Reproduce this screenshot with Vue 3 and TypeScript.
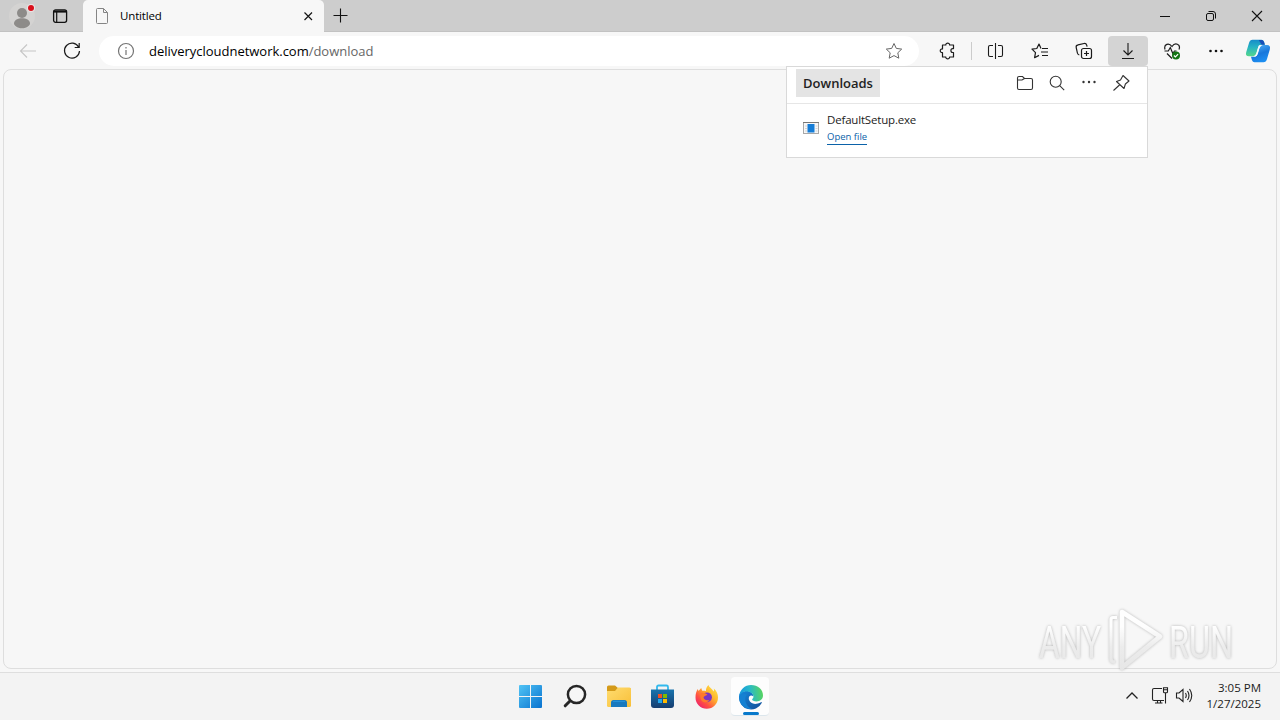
<script setup lang="ts">
import { ref } from 'vue'

const tabTitle = ref('Untitled')
const host = ref('deliverycloudnetwork.com')
const path = ref('/download')
const fileName = ref('DefaultSetup.exe')
</script>

<template>
  <div class="desktop">
    <header class="tabbar">
      <div class="profile">
        <svg width="28" height="28" viewBox="0 0 28 28">
          <circle cx="14" cy="14" r="13" fill="#d4d3d2" />
          <circle cx="14" cy="11" r="5" fill="#8d8b89" />
          <path d="M6 21.500c0-7 16-7 16 0 0 1.600-3 4.800-8 4.800s-8-3.200-8-4.800z" fill="#8d8b89" />
          <circle cx="23" cy="6" r="4" fill="#ebe4e4" />
          <circle cx="23" cy="6" r="3" fill="#d9101c" />
        </svg>
      </div>
      <button class="workspaces">
        <svg width="16" height="16" viewBox="0 0 16 16" fill="none" stroke="#111">
          <rect x="1.600" y="1.800" width="13" height="12.500" rx="2" stroke-width="1.300" />
          <path d="M1.600 3.500H14.600" stroke-width="2.200" /><path d="M4.700 4v10" stroke-width="1.200" />
        </svg>
      </button>
      <div class="tab">
        <svg width="14" height="18" viewBox="0 0 14 18" fill="none" stroke="#858585">
          <path d="M1.500 2.500q0-1 1-1h6l4 4v10q0 1-1 1h-9q-1 0-1-1zM8.500 1.500v4h4" />
        </svg>
        <span class="tab-title">{{ tabTitle }}</span>
        <svg width="10" height="10" viewBox="0 0 10 10" stroke="#151515" stroke-width="1.200">
          <path d="M1.500 1.500l7.500 7.500M9 1.500L1.500 9" />
        </svg>
      </div>
      <button class="new-tab">
        <svg width="15" height="15" viewBox="0 0 15 15" stroke="#111" stroke-width="1.100">
          <path d="M7.500 .5v14M.5 7.500h14" />
        </svg>
      </button>
      <div class="controls">
        <button>
          <svg width="12" height="12" viewBox="0 0 12 12" stroke="#111"><path d="M1 6.500h10" /></svg>
        </button>
        <button>
          <svg width="12" height="12" viewBox="0 0 12 12" fill="none" stroke="#111">
            <rect x="1.500" y="3.500" width="7" height="7" rx="1.500" />
            <path d="M3.500 1.500h4.500q2.500 0 2.500 2.500v4.500" />
          </svg>
        </button>
        <button>
          <svg width="12" height="12" viewBox="0 0 12 12" stroke="#111" stroke-width="1.100"><path d="M1 1l10 10M11 1L1 11" /></svg>
        </button>
      </div>
    </header>

    <nav class="toolbar">
      <button class="tool">
        <svg width="20" height="20" viewBox="0 0 20 20" fill="none" stroke="#c6c6c6" stroke-width="1.100"><path d="M18 10H2.500M9 3.500L2.500 10 9 16.500" /></svg>
      </button>
      <button class="tool">
        <svg width="20" height="20" viewBox="0 0 20 20" fill="none" stroke="#1b1b1b" stroke-width="1.200"><path d="M16.700 6.200A7.500 7.500 0 1 0 17.500 10M17.200 2v4.500h-4.500" /></svg>
      </button>
      <div class="address">
        <svg width="18" height="18" viewBox="0 0 18 18" fill="none" stroke="#747474" stroke-width="1.200">
          <circle cx="9" cy="9" r="7.500" /><path d="M9 8v5M9 5v1.400" />
        </svg>
        <span class="url"><span class="host">{{ host }}</span><span class="path">{{ path }}</span></span>
        <svg width="18" height="18" viewBox="0 0 18 18" fill="none" stroke="#666" stroke-linejoin="round">
          <path d="M9 1.500l2.300 4.900 5.400.7-3.900 3.700 1 5.400L9 13.600l-4.800 2.600 1-5.400-3.900-3.700 5.400-.7z" />
        </svg>
      </div>
      <button class="tool ext">
        <svg width="18" height="18" viewBox="0 0 18 18" fill="none" stroke="#1b1b1b" stroke-width="1.200" stroke-linejoin="round">
          <path d="M3.500 3h3.300c-.2-2.500 4-2.500 3.800 0H14.500v3.600h-.8c-2.400 0-2.400 3.900 0 3.900h.8V15h-3.900c.2 2.400-4 2.400-3.800 0H3.500v-4.300c-3 .2-3-4 0-3.800z" />
        </svg>
      </button>
      <span class="separator"></span>
      <button class="tool">
        <svg width="18" height="18" viewBox="0 0 18 18" fill="none" stroke="#1b1b1b" stroke-width="1.100">
          <path d="M6 3.500H3Q1.500 3.500 1.500 5v8q0 1.500 1.500 1.500h3M8.500 1v16M11 3.500h3q1.500 0 1.500 1.500v8q0 1.500-1.500 1.500h-3" />
        </svg>
      </button>
      <button class="tool">
        <svg width="18" height="18" viewBox="0 0 18 18" fill="none" stroke="#1b1b1b" stroke-width="1.200" stroke-linejoin="round">
          <path d="M10 6.500L8 2 5.800 6.500 1 7.200l3.500 3.500-.9 5 4.400-2.300M11 6.500h6M10 10h7M11 13.500h6" />
        </svg>
      </button>
      <button class="tool">
        <svg width="18" height="18" viewBox="0 0 18 18" fill="none" stroke="#1b1b1b" stroke-width="1.200">
          <rect x="6.500" y="6.500" width="10" height="10" rx="2" />
          <path d="M11.500 9v5M9 11.500h5M4.300 13C3 12.600 2.600 12 2.400 11L1.200 5.500C.9 4 1.500 3.200 3 2.900l6-1.400c1.500-.3 2.300.3 2.700 1.700l.4 1.500" />
        </svg>
      </button>
      <button class="tool selected">
        <svg width="18" height="18" viewBox="0 0 18 18" fill="none" stroke="#1b1b1b" stroke-width="1.100"><path d="M9 1v12M4.500 8.500L9 13l4.500-4.500M3 16.500h12" /></svg>
      </button>
      <button class="tool">
        <svg width="18" height="18" viewBox="0 0 18 18" fill="none" stroke="#1b1b1b" stroke-width="1.200">
          <path d="M2 7.500C.5 2 6 .5 9 4.500 12 0 18 2 16 7.500M1.500 9h3.800l2-3.500 2.500 6L11.500 9h2M4 11.500l5 5" />
          <circle cx="13" cy="13.500" r="4" fill="#137514" stroke="none" />
          <path d="M10.900 13.500l1.500 1.500 2.700-2.800" stroke="#fff" />
        </svg>
      </button>
      <button class="tool">
        <svg width="18" height="18" viewBox="0 0 18 18" fill="#111"><circle cx="3.500" cy="9" r="1.300" /><circle cx="9" cy="9" r="1.300" /><circle cx="14.500" cy="9" r="1.300" /></svg>
      </button>
      <button class="tool copilot">
        <svg width="26" height="24" viewBox="0 0 26 24">
          <defs>
            <linearGradient id="cpA" x1="0" y1="0" x2="0" y2="1"><stop offset="0" stop-color="#168bc9" /><stop offset=".45" stop-color="#26b3c4" /><stop offset="1" stop-color="#55d78b" /></linearGradient>
            <linearGradient id="cpB" x1="0" y1="0" x2=".4" y2="1"><stop offset="0" stop-color="#56b8fa" /><stop offset=".6" stop-color="#1877db" /><stop offset="1" stop-color="#1c8df0" /></linearGradient>
          </defs>
          <path d="M7.500.7h9q1.800 0 2.500 2l1 3h-3.500q-2.500 0-3.300 2.500l-1.500 5q-1 4-4.500 4H4q-4 0-2.800-4L4 4Q5 .7 7.500.7z" fill="url(#cpA)" />
          <path d="M18.500 23.300h-9q-1.800 0-2.500-2L6 17.700h2.500q3.300 0 4.200-3.200l1.500-5q1-3.500 4.500-3.500H22q4 0 2.800 4.500L22 20q-1 3.300-3.500 3.300z" fill="url(#cpB)" />
          <path d="M13.800 1h2.700q1.800 0 2.500 2l.8 2.700h-3.300z" fill="#164eb8" />
          <path d="M14 6.200h3q-1.800.8-2.600 3.300l-1.600 5.200q-.8 2.400-2.600 3H8.800q1.800-1 2.500-3.300l1.500-5Q13.300 7 14 6.200z" fill="#f5fbfd" />
        </svg>
      </button>
    </nav>

    <main class="page"></main>

    <section class="downloads">
      <div class="downloads-head">
        <h1>Downloads</h1>
        <div class="actions">
          <svg width="18" height="18" viewBox="0 0 18 18" fill="none" stroke="#333" stroke-width="1.100"><path d="M1.500 5.500v8.500q0 1.500 1.500 1.500h12q1.500 0 1.500-1.500V6q0-1.500-1.500-1.500H8.500L6.500 2.500H3q-1.500 0-1.500 1.500zM1.500 6H6l2.500-1.500" /></svg>
          <svg width="18" height="18" viewBox="0 0 18 18" fill="none" stroke="#333" stroke-width="1.100"><circle cx="7.700" cy="7.700" r="5.500" /><path d="M11.700 11.700l4.500 4.500" /></svg>
          <svg width="18" height="18" viewBox="0 0 18 18" fill="#333"><circle cx="3.500" cy="8" r="1.200" /><circle cx="9" cy="8" r="1.200" /><circle cx="14.500" cy="8" r="1.200" /></svg>
          <svg width="18" height="18" viewBox="0 0 18 18" fill="none" stroke="#333" stroke-width="1.100" stroke-linejoin="round"><path d="M11 1.500l6 5.500-3.600 3-1.400 4.500-7.500-7L8.500 6zM8 10.500L1.500 16.500" /></svg>
        </div>
      </div>
      <div class="download-item">
        <svg width="16" height="14" viewBox="0 0 16 14">
          <rect x=".5" y="1.500" width="15" height="11" fill="#f7f7f7" stroke="#a8a8a8" />
          <path d="M0 1.500h16" stroke="#777" />
          <path d="M2 5h2M2 7.500h2M2 10h2M12.500 5h2M12.500 7.500h2M12.500 10h2" stroke="#d4d4d4" />
          <rect x="4.500" y="3" width="7" height="8.500" fill="#157dd7" />
        </svg>
        <div class="file">
          <span class="file-name">{{ fileName }}</span>
          <a class="open">Open file</a>
        </div>
      </div>
    </section>

    <footer class="taskbar">
      <div class="apps">
        <div class="app">
          <svg width="26" height="26" viewBox="0 0 26 26">
            <defs><linearGradient id="win" x1="0" y1="0" x2="1" y2="1"><stop stop-color="#51c4f5" /><stop offset="1" stop-color="#0872cf" /></linearGradient></defs>
            <path d="M2 1h10v11H1V2q0-1 1-1zM13 1H23q1 0 1 1v10H13zM1 13h11v11H2q-1 0-1-1zM13 13H24v10q0 1-1 1h-10z" fill="url(#win)" />
          </svg>
        </div>
        <div class="app">
          <svg width="26" height="26" viewBox="0 0 26 26" fill="none"><circle cx="14.500" cy="10.500" r="8.600" fill="#f6f6f6" stroke="#262626" stroke-width="2.500" /><path d="M8.200 16.800l-5 5" stroke="#262626" stroke-width="3" stroke-linecap="round" /></svg>
        </div>
        <div class="app">
          <svg width="26" height="26" viewBox="0 0 26 26">
            <defs><linearGradient id="fold" x1="0" y1="0" x2="1" y2="1"><stop stop-color="#ffdc70" /><stop offset="1" stop-color="#f8bf38" /></linearGradient></defs>
            <path d="M1 3q0-1.500 1.500-1.500H9L12 4h11.500Q25 4 25 5.500V22H1z" fill="#d49a19" />
            <path d="M1 7h8l3-3.500h11.500Q25 3.500 25 5v16.500q0 1.500-1.500 1.500h-21Q1 23 1 21.500z" fill="url(#fold)" />
            <path d="M5 23v-4.500Q5 16 7.500 16h11q2.500 0 2.500 2.500V23z" fill="#1878bd" /><path d="M7 17.300h12" stroke="#2996dc" />
          </svg>
        </div>
        <div class="app">
          <svg width="26" height="26" viewBox="0 0 26 26">
            <defs><linearGradient id="store" x1="0" y1="0" x2="0" y2="1"><stop stop-color="#1974ad" /><stop offset="1" stop-color="#153d70" /></linearGradient></defs>
            <path d="M7 7V3q0-1.500 1.500-1.500h8Q18 1.500 18 3v4" fill="none" stroke="#32b9ed" stroke-width="1.800" />
            <path d="M1 5.500h23V21q0 3-3 3H4q-3 0-3-3z" fill="url(#store)" />
            <path d="M8 10h4v4H8z" fill="#f25022" /><path d="M13 10h4v4h-4z" fill="#7fba00" /><path d="M8 15h4v4H8z" fill="#22a7ee" /><path d="M13 15h4v4h-4z" fill="#ffb900" />
          </svg>
        </div>
        <div class="app">
          <svg width="26" height="26" viewBox="0 0 26 26">
            <defs><linearGradient id="fx" x1="1" y1="0" x2=".1" y2="1"><stop stop-color="#fff04f" /><stop offset=".4" stop-color="#ffb52c" /><stop offset=".7" stop-color="#ff5142" /><stop offset="1" stop-color="#e91779" /></linearGradient></defs>
            <path d="M14.500 1c.5 2.500 3.500 3.500 5 6.500.6-.8.6-2 .3-3 3 2.500 4.200 5.500 4.200 9a11.200 11.200 0 0 1-22.500 0c0-3.500.8-6.300 2.300-8.500L4.500 7l2.700-3 1 2.800c1.400-.3 2.600-.2 3.800.2-.2-2.500.8-4.500 2.500-6z" fill="url(#fx)" />
            <circle cx="13" cy="13.300" r="4.900" fill="#7a35c4" />
            <path d="M7 9.200c2.300-1.300 4.500.2 6.500 1.300-1 1.500-3.500 1-4 3 .7 2.500 3.500 3.500 6 2.200-1.500 3.300-6.500 3.500-8.300.2-1.200-2-1.200-4.700-.2-6.700z" fill="#ff7a2c" />
          </svg>
        </div>
        <div class="app active">
          <svg width="26" height="26" viewBox="0 0 26 26">
            <defs>
              <linearGradient id="edA" x1="0" y1=".4" x2="1" y2=".3"><stop stop-color="#1595df" /><stop offset=".45" stop-color="#28b9c9" /><stop offset="1" stop-color="#5bd65a" /></linearGradient>
              <linearGradient id="edB" x1="0" y1="0" x2="1" y2="1"><stop stop-color="#1688dc" /><stop offset="1" stop-color="#124f98" /></linearGradient>
            </defs>
            <path d="M1 13c0-4 4-6 7.500-6 4 0 7 2.500 7 5.500-3-2.500-5.500.2-4.500 3.300 1.500 4.700 7 5.200 12 2.400.6-.3 1 .2.700.7A12 12 0 0 1 1 13z" fill="url(#edB)" />
            <path d="M1 13C1.500 5.500 7 1 13 1c7 0 12 4.800 12 10.300 0 4-3 6.200-6.500 6.200-2.500 0-4.400-.9-4.400-1.900 0-.8 1.400-1.100 1.400-3.100C15.500 9.500 12 7.500 8.500 7.500 5 7.500 2 9.500 1 13z" fill="url(#edA)" />
            <path d="M8.800 10.500c-3.300 4-1.300 12 5.200 14.400C6 25.500 1 19.500 1 13c1.500-3 4.800-4 7.800-2.500z" fill="#1581d2" />
          </svg>
          <i class="indicator"></i>
        </div>
      </div>
      <div class="tray">
        <svg width="14" height="16" viewBox="0 0 14 16" fill="none" stroke="#222" stroke-width="1.300"><path d="M1.500 10.500L7 5 12.500 10.500" /></svg>
        <svg width="18" height="18" viewBox="0 0 18 18" fill="none" stroke="#222" stroke-width="1.100"><path d="M11 1.500H3q-1.500 0-1.500 1.500v9q0 1.500 1.500 1.500h10M6.500 14v2M4 16h7.500M9.500 14v2M12.500 .8h4v4q0 1-1 1h-2q-1 0-1-1zM12.500 2.800h4M14.500 6v10.500" /></svg>
        <svg width="18" height="18" viewBox="0 0 18 18" fill="none" stroke="#222" stroke-width="1.100"><path d="M1.500 6v5h2.500l4 3.500v-12L4 6zM10.500 6q1.500 2.500 0 5M12.500 4q3 4.500 0 9M14.500 2q4.500 6.500 0 13" /></svg>
        <div class="clock"><span>3:05 PM</span><span>1/27/2025</span></div>
      </div>
    </footer>

    <svg class="watermark" width="204" height="74" viewBox="0 0 204 74">
      <defs>
        <linearGradient id="mark" gradientUnits="userSpaceOnUse" x1="0" y1="8" x2="0" y2="66"><stop offset=".25" stop-color="#fff" /><stop offset=".6" stop-color="#ececec" /><stop offset="1" stop-color="#e6e6e6" /></linearGradient>
        <filter id="glow" x="-10%" y="-20%" width="120%" height="140%"><feDropShadow dx="0" dy="0" stdDeviation="1.500" flood-color="#888" flood-opacity=".65" /></filter>
      </defs>
      <g filter="url(#glow)" fill="url(#mark)">
        <text x="5" y="54" textLength="62" lengthAdjust="spacingAndGlyphs">ANY</text>
        <text x="135" y="54" textLength="64" lengthAdjust="spacingAndGlyphs">RUN</text>
        <path d="M83 13.500h-4q-2 0-2 2V55q0 3 4 3" fill="none" stroke="url(#mark)" stroke-width="3" />
        <path d="M88 8l38 24.500-38 31z" fill="none" stroke="url(#mark)" stroke-width="4.500" stroke-linejoin="round" />
      </g>
    </svg>
  </div>
</template>

<style>
body { margin: 0; }
</style>

<style scoped>
.desktop { position: relative; display: flex; flex-direction: column; width: 1280px; height: 720px; overflow: hidden; background: #f7f7f7; color: #1b1b1b; font-family: "Open Sans", "Noto Sans", sans-serif; }
svg { display: block; flex: none; }
button { display: flex; align-items: center; justify-content: center; margin: 0; padding: 0; border: 0; background: transparent; }
.tabbar { display: flex; flex: none; box-sizing: border-box; height: 32px; background: #cdcdcd; border-bottom: 1px solid #c2c2c2; }
.profile { display: flex; align-items: center; width: 36px; padding-left: 8px; }
.workspaces { width: 32px; }
.tab { display: flex; align-items: center; box-sizing: border-box; width: 241px; height: 32px; margin-left: 7px; padding: 0 11px 0 12px; background: #f7f7f7; border-radius: 5px 5px 0 0; }
.tab-title { flex: 1; margin-left: 11px; font-size: 11.500px; line-height: 16px; letter-spacing: -.15px; color: #000; }
.new-tab { width: 33px; }
.controls { display: flex; margin-left: auto; }
.controls button { width: 46px; }
.toolbar { display: flex; flex: none; align-items: center; height: 37px; padding: 0 0 0 6px; }
.tool { flex: none; width: 44px; height: 30px; }
.address { display: flex; flex: none; align-items: center; box-sizing: border-box; width: 820px; height: 30px; margin-left: 5px; padding: 0 16px 0 18px; border-radius: 15px; background: #fff; }
.url { flex: 1; margin-left: 14px; font-size: 13px; line-height: 20px; letter-spacing: -.02px; color: #000; }
.path { color: #666; }
.ext { margin-left: 7px; }
.separator { width: 1px; height: 18px; margin: 0 2px 0 1px; background: #ccc; }
.selected { width: 40px; margin: 0 2px; border-radius: 4px; background: #d4d4d4; }
.copilot { width: 40px; }
.page { flex: 1; margin: 0 3px 3px; border: 1px solid #dedede; border-radius: 8px; background: #f7f7f7; }
.downloads { position: absolute; top: 66px; left: 786px; box-sizing: border-box; width: 362px; height: 92px; border: 1px solid #d9d9d9; background: #fff; }
.downloads-head { display: flex; box-sizing: border-box; height: 37px; padding: 2px 17px 0 9px; border-bottom: 1px solid #e6e6e6; }
h1 { width: 84px; height: 28px; margin: 0; background: #e4e4e4; text-align: center; font-size: 13px; font-weight: 600; line-height: 28px; color: #222; }
.actions { display: flex; gap: 14px; margin-left: auto; padding-top: 5px; }
.download-item { display: flex; padding: 8px 16px; }
.download-item svg { margin-top: 9px; }
.file { display: flex; flex-direction: column; align-items: flex-start; margin-left: 8px; }
.file-name { font-size: 11.500px; line-height: 16px; letter-spacing: -.18px; }
.open { margin-top: 2px; border-bottom: 1px solid #0b62a9; color: #0b62a9; font-size: 9.500px; line-height: 14px; }
.taskbar { display: flex; flex: none; box-sizing: border-box; height: 48px; padding-left: 508px; border-top: 1px solid #dedede; background: #f3f3f3; }
.apps { display: flex; padding-top: 4px; }
.app { display: flex; box-sizing: border-box; width: 38px; height: 39px; margin: 0 3px; padding: 7px 0 0 7px; border-radius: 4px; }
.active { position: relative; background: #fdfdfd; border-bottom: 1px solid #dce6ec; }
.indicator { position: absolute; bottom: 0; left: 12px; width: 16px; height: 3px; border-radius: 2px; background: #0879cb; }
.tray { display: flex; align-items: center; margin-left: auto; padding-right: 19px; padding-bottom: 1px; }
.tray svg:nth-child(2) { margin-left: 12px; }
.tray svg:nth-child(3) { margin-left: 6px; }
.clock { display: flex; flex-direction: column; width: 56px; margin-left: 12px; text-align: right; font-size: 11.500px; line-height: 16px; white-space: nowrap; }
.watermark { position: absolute; top: 604px; left: 1034px; opacity: .95; font-family: Roboto, sans-serif; font-size: 45px; font-weight: 400; }
</style>
